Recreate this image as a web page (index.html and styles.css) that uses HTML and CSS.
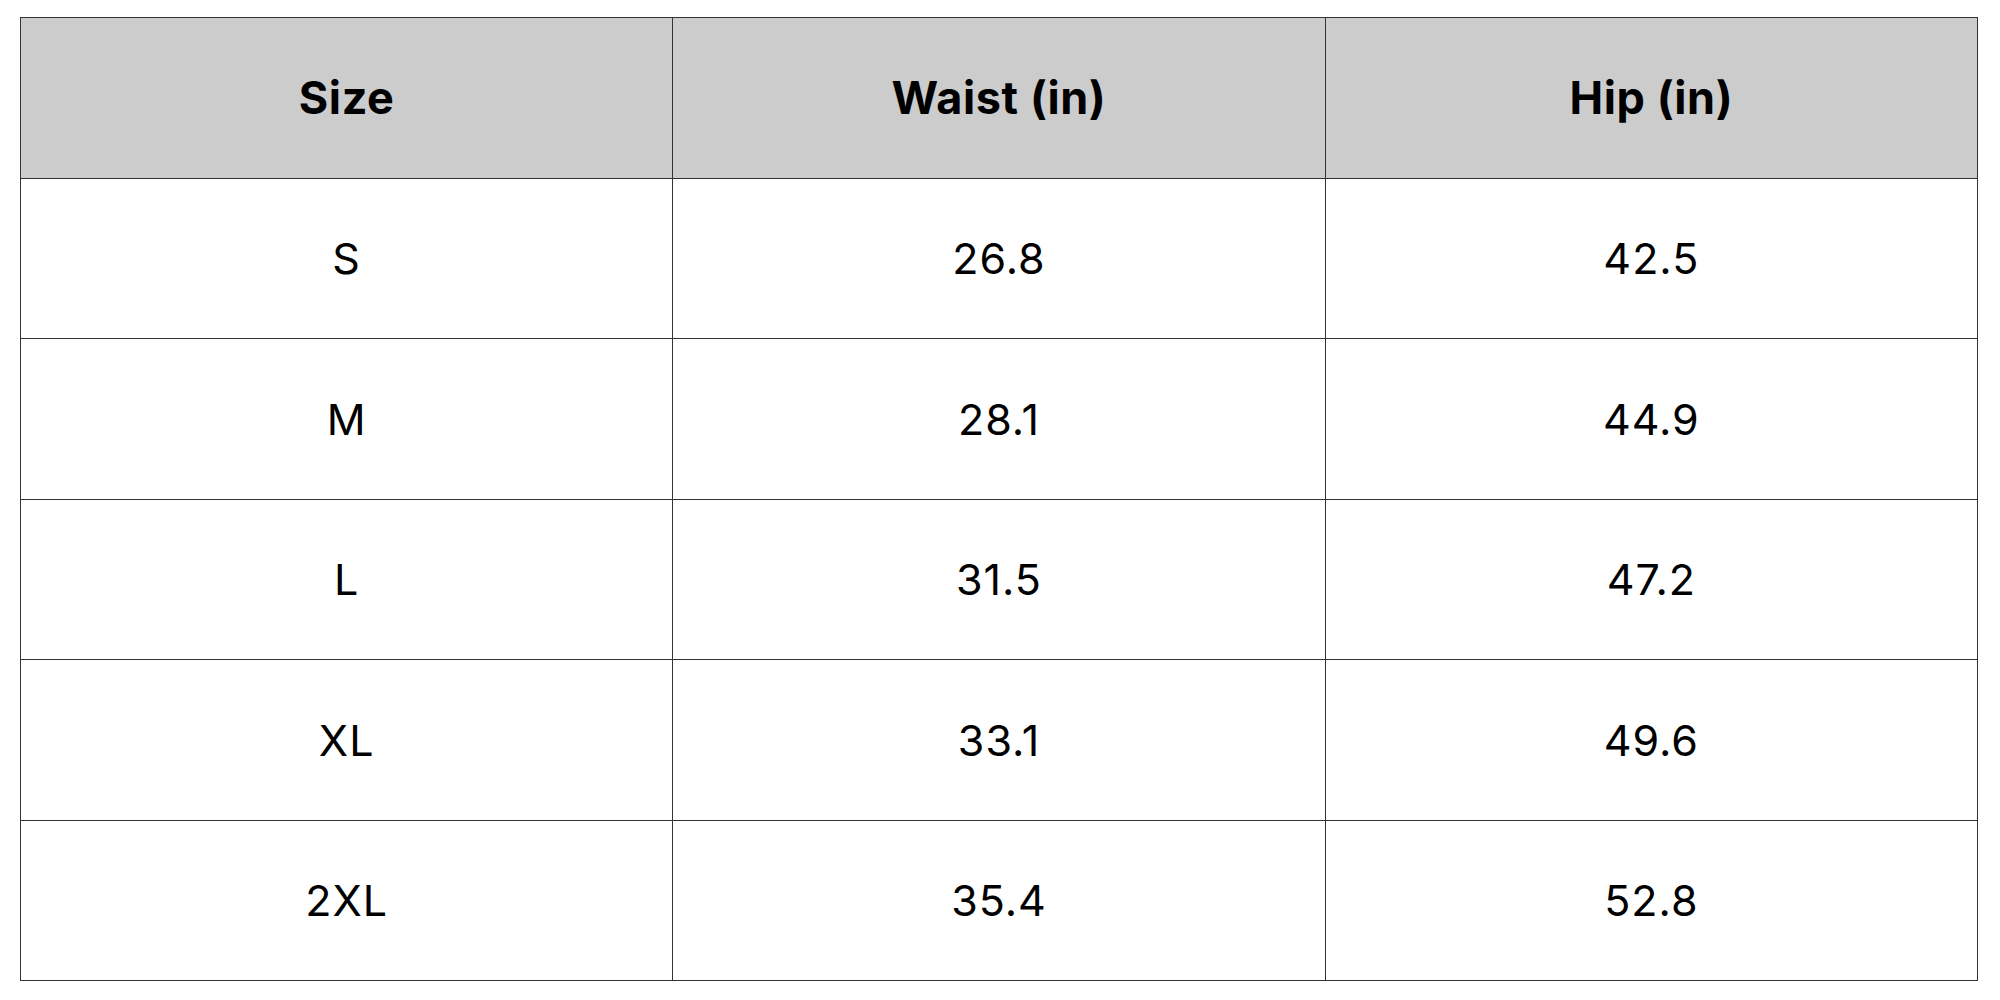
FILE: index.html
```html
<!DOCTYPE html>
<html>
<head>
<meta charset="utf-8">
<link rel="stylesheet" href="styles.css">
</head>
<body>
<div class="page">
<table class="chart">
<thead>
<tr><th>Size</th><th>Waist (in)</th><th>Hip (in)</th></tr>
</thead>
<tbody>
<tr><td>S</td><td>26.8</td><td>42.5</td></tr>
<tr><td>M</td><td>28.1</td><td>44.9</td></tr>
<tr><td>L</td><td>31.5</td><td>47.2</td></tr>
<tr><td>XL</td><td>33.1</td><td>49.6</td></tr>
<tr><td>2XL</td><td>35.4</td><td>52.8</td></tr>
</tbody>
</table>
</div>
</body>
</html>
```

FILE: styles.css
```css
html, body {
  margin: 0;
  padding: 0;
  background: #ffffff;
}
.page {
  padding: 17px 21px 0 20px;
}
.chart {
  width: 1958px;
  border-collapse: collapse;
  table-layout: fixed;
  font-family: Inter, "Open Sans", sans-serif;
  color: #000;
}
.chart th, .chart td {
  border: 1px solid #333;
  height: 159.5px;
  text-align: center;
  vertical-align: middle;
  padding: 0;
  font-size: 43px;
  letter-spacing: 1px;
}
.chart th {
  background: #cccccc;
  font-weight: 700;
  font-size: 45px;
  letter-spacing: 0.6px;
}
.chart td {
  font-weight: 400;
}
```
